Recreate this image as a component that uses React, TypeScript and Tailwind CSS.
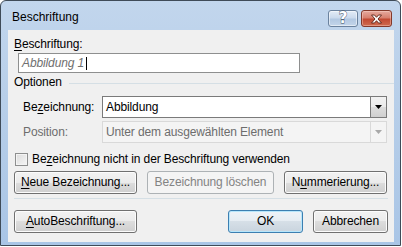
import clsx from 'clsx';
import type { ReactNode } from 'react';

const btnNormal =
  'border-[#707070] bg-[linear-gradient(to_bottom,#f2f2f2_0%,#ebebeb_50%,#dddddd_50%,#cfcfcf_100%)] shadow-[inset_0_0_0_1px_#fcfcfc] text-black';
const btnDefault =
  'border-[#3c7fb1] bg-[linear-gradient(to_bottom,#eef3f8_0%,#e5ecf2_50%,#d6dfe7_50%,#c9d4de_100%)] shadow-[inset_0_0_0_1px_#b7e6fb] text-black';
const btnDisabled = 'border-[#adb2b5] bg-[#f4f4f4] text-[#838383]';

function Btn({
  children,
  className,
  disabled,
  isDefault,
}: {
  children: ReactNode;
  className?: string;
  disabled?: boolean;
  isDefault?: boolean;
}) {
  return (
    <div
      className={clsx(
        'h-[23px] flex items-center justify-center rounded-[3px] border leading-[15px] pb-[1px]',
        disabled ? btnDisabled : isDefault ? btnDefault : btnNormal,
        className
      )}
    >
      {children}
    </div>
  );
}

function U({ children }: { children: ReactNode }) {
  return <span className="underline underline-offset-[2px]">{children}</span>;
}

function Arrow({ color }: { color: string }) {
  return (
    <svg width="7" height="4" viewBox="0 0 7 4">
      <path d="M0 0h7L3.5 4z" fill={color} />
    </svg>
  );
}

export default function App() {
  return (
    <div className="w-[402px] h-[247px] bg-white font-['Liberation_Sans',Arial,sans-serif] text-[12px] leading-[15px] tracking-[-0.12px] text-black">
      <div className="relative w-[401px] h-[246px] rounded-t-[6px] border border-[#3f4b58] bg-[linear-gradient(to_bottom,#c2d6ed_0%,#b8cfe9_40%,#a9c5e6_100%)] flex flex-col">
        {/* title bar */}
        <div className="h-[29px] flex items-start">
          <div className="pl-[11px] pt-[9px] flex-1 tracking-normal">Beschriftung</div>
          <div className="flex gap-[3px] pt-[9px] pr-[8px]">
            <div className="w-[30px] h-[17px] rounded-[3px] border border-[#6b829e] bg-[linear-gradient(to_bottom,#e3ecf7_0%,#cbdaed_45%,#b2c8e2_55%,#c3d5ea_100%)] shadow-[inset_0_0_0_1px_rgba(255,255,255,0.5)] flex items-center justify-center">
              <span className="text-[15px] leading-[15px] font-bold text-white [-webkit-text-stroke:0.8px_#3c4a5c] [paint-order:stroke_fill] font-['DejaVu_Sans',sans-serif]">
                ?
              </span>
            </div>
            <div className="w-[31px] h-[17px] rounded-[3px] border border-[#83392b] bg-[linear-gradient(to_bottom,#e6aa9f_0%,#d7806f_45%,#c24a33_55%,#cf6b50_100%)] shadow-[inset_0_0_0_1px_rgba(255,220,210,0.4)] flex items-center justify-center">
              <svg width="13" height="10" viewBox="0 0 13 10">
                <path
                  d="M1.5 1h3l2 2.3L8.5 1h3l-3.5 4 3.5 4h-3l-2-2.3L4.5 9h-3L5 5z"
                  fill="#fff"
                  stroke="#5a1f14"
                  strokeWidth="0.9"
                  strokeLinejoin="round"
                />
              </svg>
            </div>
          </div>
        </div>

        {/* client area */}
        <div className="ml-[7px] w-[386px] h-[212px] bg-[#f0f0f0] flex flex-col px-[6px] pt-[7px]">
          <div>
            <U>B</U>eschriftung:
          </div>
          <div className="mt-[1px] ml-[4px] w-[282px] h-[20px] border border-[#8e8f8f] bg-white flex items-center pl-[3px]">
            <span className="italic text-[#707070]">Abbildung 1</span>
            <span className="ml-[2px] w-[1px] h-[13px] bg-black" />
          </div>

          <div className="mt-[2px] flex items-center mr-[-6px]">
            <span>Optionen</span>
            <div className="ml-[7px] flex-1 h-[1px] bg-[#d5dfe5] mt-[1px]" />
          </div>

          <div className="mt-[6px] flex items-center">
            <div className="w-[88px] pl-[9px]">
              Be<U>z</U>eichnung:
            </div>
            <div className="w-[285px] h-[22px] border border-[#7a7a7a] bg-white flex">
              <div className="flex-1 flex items-center pl-[3px]">Abbildung</div>
              <div className="w-[16px] h-full border-l border-[#7a7a7a] bg-[linear-gradient(to_bottom,#f2f2f2_0%,#ebebeb_50%,#dddddd_50%,#cfcfcf_100%)] flex items-center justify-center">
                <Arrow color="#000" />
              </div>
            </div>
          </div>

          <div className="mt-[3px] flex items-center">
            <div className="w-[88px] pl-[9px] text-[#6d6d6d]">Position:</div>
            <div className="w-[285px] h-[22px] border border-[#d9d9d9] bg-[#f4f4f4] flex">
              <div className="flex-1 flex items-center pl-[3px] text-[#6d6d6d]">
                Unter dem ausgewählten Element
              </div>
              <div className="w-[16px] h-full border-l border-[#d9d9d9] flex items-center justify-center">
                <Arrow color="#a8a8a8" />
              </div>
            </div>
          </div>

          <div className="mt-[9px] flex items-center">
            <div className="ml-[1px] w-[13px] h-[13px] border border-[#8e8f8f] bg-[linear-gradient(135deg,#dcdcdc_0%,#f6f6f6_100%)] shadow-[inset_0_0_0_1px_#f4f4f4]" />
            <span className="ml-[4px]">
              Be<U>z</U>eichnung nicht in der Beschriftung verwenden
            </span>
          </div>

          <div className="mt-[4px] flex gap-[10px]">
            <Btn className="w-[123px]">
              <U>N</U>eue Bezeichnung...
            </Btn>
            <Btn className="w-[127px]" disabled>
              Bezeichnung löschen
            </Btn>
            <Btn className="w-[103px]">
              N<U>u</U>mmerierung...
            </Btn>
          </div>

          <div className="mt-[4px] h-[1px] bg-[#d5dfe5]" />

          <div className="mt-[11px] flex">
            <Btn className="w-[123px]">
              <U>A</U>utoBeschriftung...
            </Btn>
            <div className="flex-1" />
            <Btn className="w-[75px]" isDefault>
              OK
            </Btn>
            <Btn className="w-[75px] ml-[10px]">Abbrechen</Btn>
          </div>
        </div>
      </div>
    </div>
  );
}
